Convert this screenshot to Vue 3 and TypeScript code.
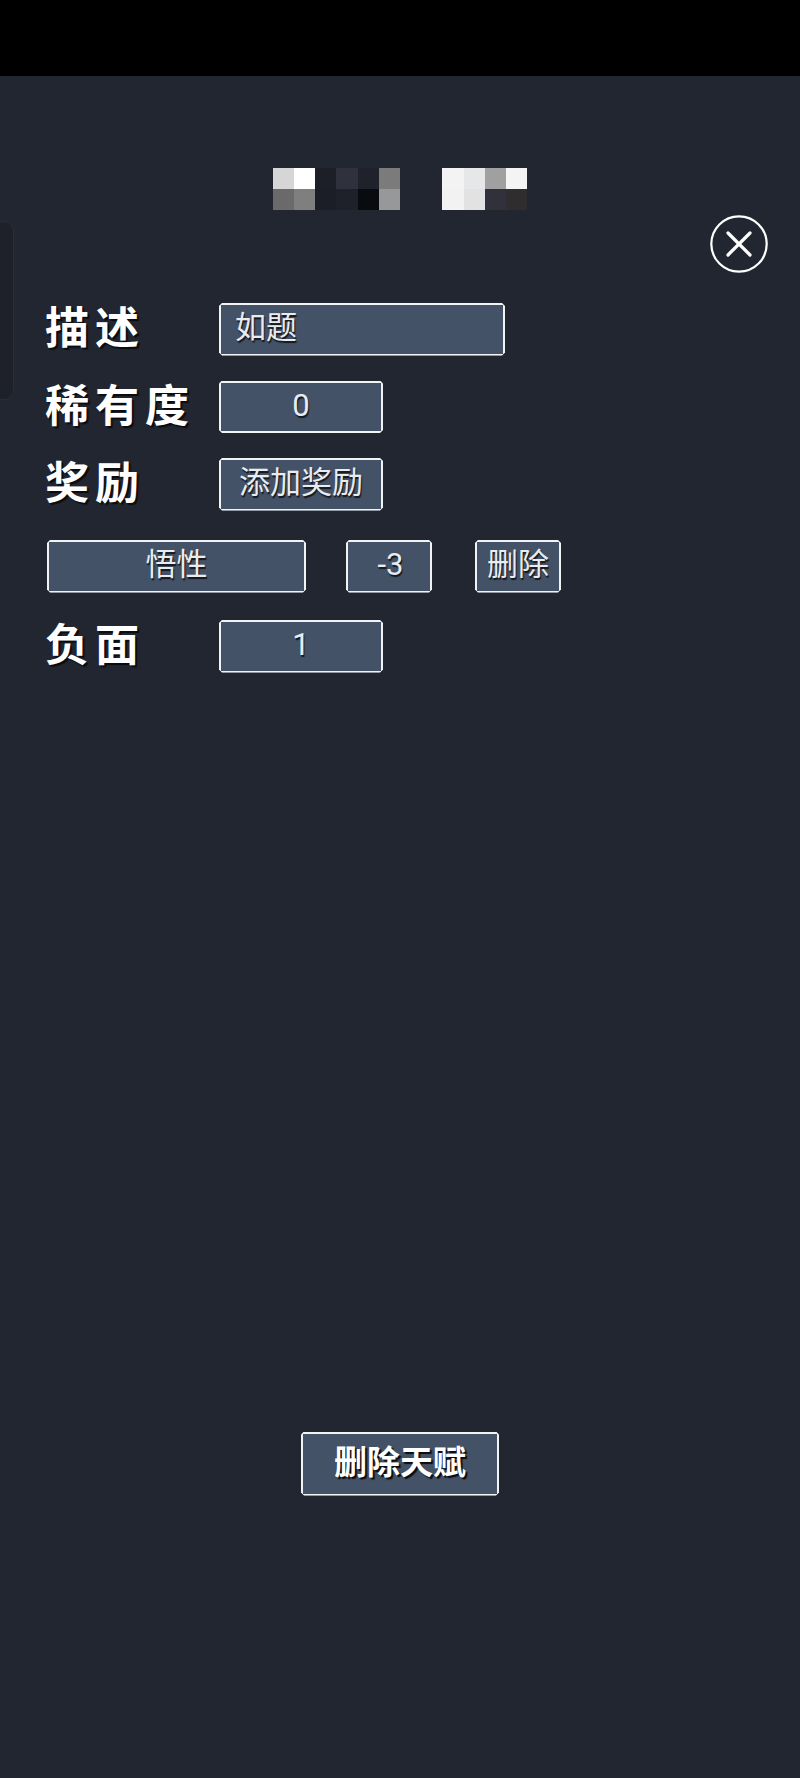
<script setup lang="ts">
const mosaicLeft: string[] = ['#d6d6d6', '#ffffff', '#1c1f28', '#2f323c', '#1f222b', '#7b7b7b', '#6a6a6a', '#7f7f7f', '#1c1e27', '#1f212a', '#0a0b0f', '#979899']
const mosaicRight: string[] = ['#f3f3f3', '#e6e7e9', '#a0a0a0', '#f4f4f4', '#f2f2f2', '#e2e2e2', '#30313b', '#2f2d2e']
</script>

<template>
  <div class="page">
    <div class="topbar"></div>
    <div class="content">
      <div class="side-tab"></div>
      <button class="close" type="button" aria-label="关闭">
        <svg viewBox="0 0 58 58" width="58" height="58">
          <circle cx="29" cy="29" r="27.7" fill="none" stroke="#fff" stroke-width="2.2" />
          <path d="M18 18 L40 40 M40 18 L18 40" stroke="#fff" stroke-width="3.2" stroke-linecap="round" fill="none" />
        </svg>
      </button>

      <div class="title">
        <div class="mosaic six">
          <span v-for="(c, i) in mosaicLeft" :key="i" :style="{ background: c }"></span>
        </div>
        <div class="mosaic four">
          <span v-for="(c, i) in mosaicRight" :key="i" :style="{ background: c }"></span>
        </div>
      </div>

      <div class="form">
        <div class="row">
          <div class="label">描述</div>
          <div class="box wide left">如题</div>
        </div>
        <div class="row">
          <div class="label">稀有度</div>
          <div class="box mid">0</div>
        </div>
        <div class="row">
          <div class="label">奖励</div>
          <div class="box mid">添加奖励</div>
        </div>
        <div class="row reward">
          <div class="box name">悟性</div>
          <div class="box small shift">-3</div>
          <div class="box small">删除</div>
        </div>
        <div class="row">
          <div class="label">负面</div>
          <div class="box mid">1</div>
        </div>
      </div>

      <div class="footer">
        <div class="box danger">删除天赋</div>
      </div>
    </div>
  </div>
</template>

<style>
html, body { margin: 0; background: #222631; }
</style>

<style scoped>
.page {
  width: 800px;
  height: 1778px;
  display: flex;
  flex-direction: column;
  background: #222631;
  font-family: "Roboto", "Noto Sans CJK SC", sans-serif;
  overflow: hidden;
}
.topbar {
  height: 76px;
  background: #000;
  flex: none;
}
.content {
  position: relative;
  flex: 1;
  display: flex;
  flex-direction: column;
}
.side-tab {
  position: absolute;
  left: -12px;
  top: 145px;
  width: 24px;
  height: 177px;
  border: 1px solid #2a2e39;
  border-radius: 10px;
  background: #1e212a;
}
.close {
  position: absolute;
  left: 710px;
  top: 139px;
  width: 58px;
  height: 58px;
  padding: 0;
  border: 0;
  background: none;
}
.close svg { display: block; }
.title {
  display: flex;
  justify-content: center;
  gap: 42px;
  margin-top: 92px;
}
.mosaic {
  display: grid;
  grid-auto-rows: 21px;
}
.mosaic.six { grid-template-columns: repeat(6, 21.3px); }
.mosaic.four { grid-template-columns: repeat(4, 21.3px); }
.form {
  display: flex;
  flex-direction: column;
  gap: 25px;
  margin-top: 93px;
  padding-left: 45px;
}
.row {
  display: flex;
  align-items: center;
}
.label {
  width: 174px;
  flex: none;
  font-size: 44px;
  font-weight: 700;
  letter-spacing: 6px;
  line-height: 52px;
  white-space: nowrap;
  color: #fff;
  text-shadow: 2px 2px 1px #0b0c10;
}
.box {
  box-sizing: border-box;
  display: flex;
  align-items: center;
  justify-content: center;
  height: 52.5px;
  padding-bottom: 3px;
  border: 2px solid #f2f3f5;
  background: #445267;
  color: #e9ecef;
  font-size: 31px;
  line-height: 1;
  white-space: nowrap;
  text-shadow: 1px 2px 1px #14171e;
  clip-path: polygon(3px 0, calc(100% - 3px) 0, 100% 3px, 100% calc(100% - 3px), calc(100% - 3px) 100%, 3px 100%, 0 calc(100% - 3px), 0 3px);
}
.wide { width: 286px; }
.left { justify-content: flex-start; padding-left: 14px; }
.mid { width: 164px; }
.reward {
  margin-top: 4.5px;
  margin-left: 2px;
  margin-bottom: 2.5px;
}
.name { width: 259px; }
.small { width: 86px; }
.shift { padding-left: 3px; }
.name + .small { margin-left: 40px; }
.small + .small { margin-left: 43px; }
.footer {
  display: flex;
  justify-content: center;
  margin-top: 759px;
}
.danger {
  width: 198px;
  height: 64px;
  padding-bottom: 2px;
  font-size: 33px;
  font-weight: 700;
  color: #fff;
  text-shadow: 2px 2px 1px #0b0c10;
}
</style>
